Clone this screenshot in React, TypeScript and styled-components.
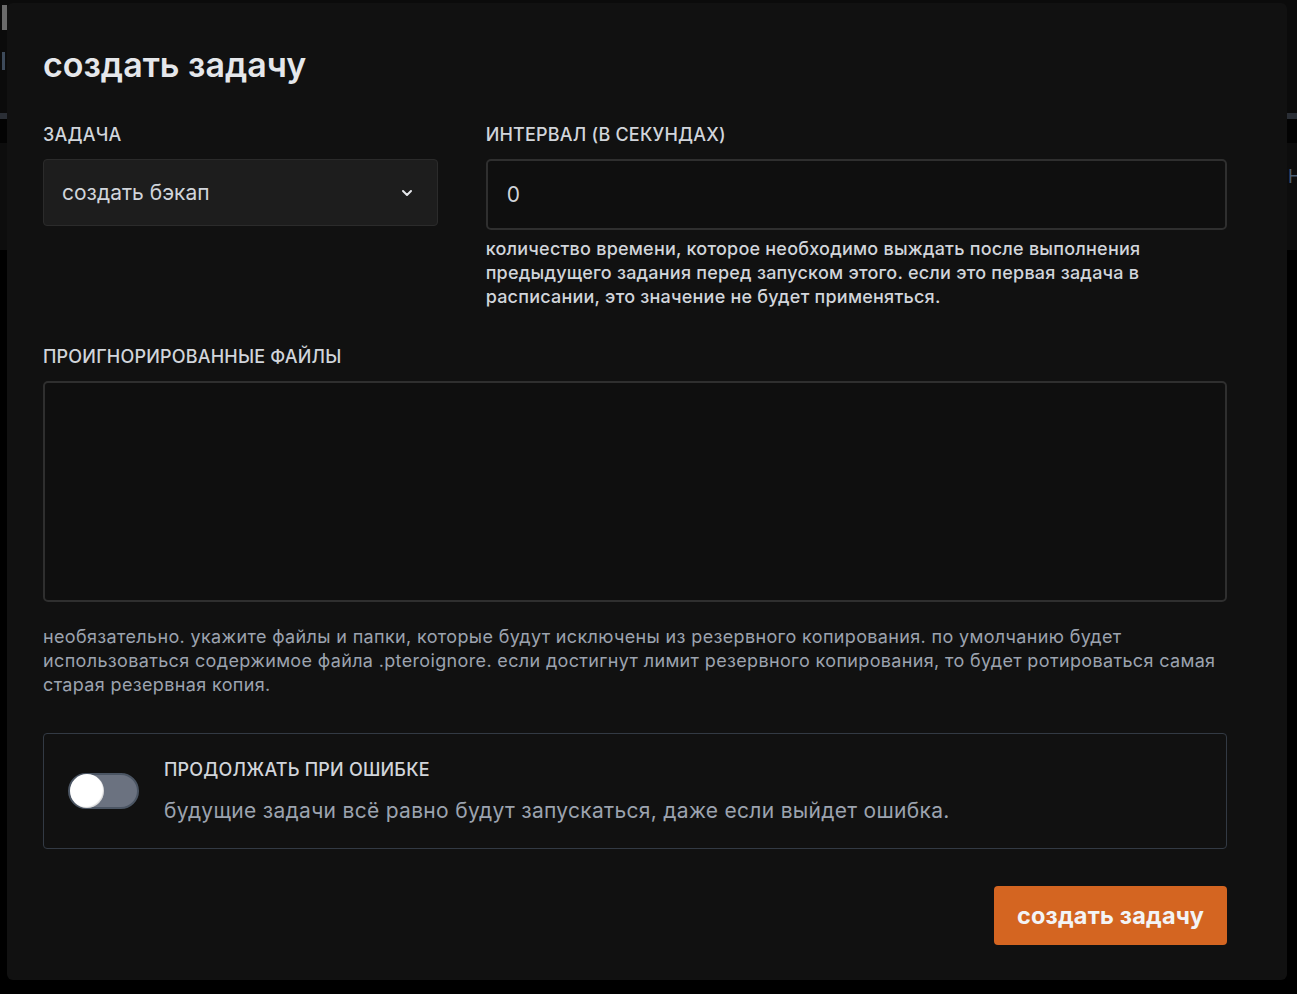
import React from "react";
import styled, { createGlobalStyle } from "styled-components";

const Global = createGlobalStyle`
  html, body { margin: 0; padding: 0; background: #000; }
  body { font-family: Inter, "Noto Sans", sans-serif; -webkit-font-smoothing: antialiased; }
  * { box-sizing: border-box; }
`;

const Page = styled.div`
  position: relative;
  width: 1297px;
  height: 994px;
  overflow: hidden;
  background: #000;
`;

const Band = styled.div<{ $h: number; $bg: string }>`
  height: ${(p) => p.$h}px;
  background: ${(p) => p.$bg};
  position: relative;
  overflow: hidden;
`;

const BgMark = styled.div<{ $left: number; $top: number; $w: number; $h: number; $c: string }>`
  position: absolute;
  top: ${(p) => p.$top}px;
  left: ${(p) => p.$left}px;
  width: ${(p) => p.$w}px;
  height: ${(p) => p.$h}px;
  background: ${(p) => p.$c};
`;

const BgText = styled.span<{ $left: number; $top: number }>`
  position: absolute;
  top: ${(p) => p.$top}px;
  left: ${(p) => p.$left}px;
  color: #4b5e73;
  font-size: 18px;
  line-height: 20px;
`;

const Modal = styled.div`
  position: absolute;
  left: 7px;
  top: 3px;
  width: 1280px;
  height: 977px;
  background: #111111;
  border-radius: 6px;
  padding: 40px 60px 0 36px;
  display: flex;
  flex-direction: column;
`;

const Title = styled.h2`
  margin: 0;
  font-size: 34px;
  font-weight: 600;
  color: #e5e7eb;
  line-height: 44px;
  letter-spacing: 0;
`;

const TopRow = styled.div`
  display: flex;
  margin-top: 36px;
`;

const LeftCol = styled.div`
  width: 33.333%;
  display: flex;
  flex-direction: column;
`;

const RightCol = styled.div`
  width: 66.667%;
  padding-left: 48px;
  display: flex;
  flex-direction: column;
`;

const Label = styled.label`
  display: block;
  font-size: 18px;
  font-weight: 500;
  text-transform: uppercase;
  color: #d1d5db;
  line-height: 24px;
  letter-spacing: 0.2px;
  margin-bottom: 12px;
`;

const Select = styled.div`
  height: 67px;
  background: #1d1d1d;
  border: 1px solid #2b2b2b;
  border-radius: 4px;
  display: flex;
  align-items: center;
  justify-content: space-between;
  padding: 0 22px 0 18px;
  color: #d1d5db;
  font-size: 21px;
`;

const Input = styled.div<{ $h: number }>`
  height: ${(p) => p.$h}px;
  background: #0f0f0f;
  border: 2px solid #2f2f2f;
  border-radius: 5px;
  padding: 0 19px;
  display: flex;
  align-items: center;
  color: #d1d5db;
  font-size: 21px;
`;

const Help = styled.p<{ $muted?: boolean }>`
  margin: ${(p) => (p.$muted ? "23px" : "7px")} 0 0;
  font-size: 18px;
  line-height: 24px;
  font-weight: ${(p) => (p.$muted ? 400 : 500)};
  color: ${(p) => (p.$muted ? "#9ca3af" : "#d1d5db")};
  letter-spacing: ${(p) => (p.$muted ? "0.35px" : "0.22px")};
`;

const Section = styled.div`
  margin-top: 36px;
  display: flex;
  flex-direction: column;
`;

const ToggleBox = styled.div`
  margin-top: 36px;
  height: 116px;
  border: 1px solid #333a44;
  border-radius: 4px;
  display: flex;
  align-items: center;
  padding: 0 24px;
  gap: 25px;
`;

const Switch = styled.div`
  width: 71px;
  height: 36px;
  border-radius: 18px;
  background: #6b7280;
  border: 2px solid #4b5563;
  position: relative;
  flex-shrink: 0;
`;

const Knob = styled.span`
  position: absolute;
  left: 0px;
  top: -1px;
  width: 34px;
  height: 34px;
  border-radius: 50%;
  background: #fff;
  box-shadow: inset -1px -1px 1px rgba(0, 0, 0, 0.15);
`;

const ToggleText = styled.div`
  display: flex;
  flex-direction: column;
  gap: 17px;
`;

const ToggleLabel = styled.div`
  font-size: 18px;
  font-weight: 500;
  color: #d1d5db;
  letter-spacing: 0.2px;
  line-height: 22px;
`;

const ToggleDesc = styled.div`
  font-size: 21px;
  color: #9ca3af;
  line-height: 26px;
  letter-spacing: 0.3px;
`;

const Footer = styled.div`
  margin-top: 37px;
  display: flex;
  justify-content: flex-end;
`;

const Button = styled.button`
  height: 59px;
  width: 233px;
  border: none;
  border-radius: 4px;
  background: #d46521;
  color: #f3f4f6;
  font-family: Inter, "Noto Sans", sans-serif;
  font-size: 23.5px;
  font-weight: 700;
  letter-spacing: 0.2px;
  cursor: pointer;
`;

const Chevron = () => (
  <svg width="16" height="16" viewBox="0 0 24 24" fill="none" stroke="#e5e7eb" strokeWidth="3" strokeLinecap="round" strokeLinejoin="round">
    <path d="M6 9l6 6 6-6" />
  </svg>
);

export default function App() {
  return (
    <>
      <Global />
      <Page>
        <Band $h={113} $bg="#0b0b0b">
          <BgMark $left={2} $top={5} $w={5} $h={25} $c="#6b6b6b" />
          <BgMark $left={2} $top={52} $w={3} $h={18} $c="#3d4a5a" />
        </Band>
        <Band $h={6} $bg="#2a2e35" />
        <Band $h={24} $bg="#030303" />
        <Band $h={107} $bg="#0d0d0d">
          <BgText $left={1288} $top={24}>Н</BgText>
        </Band>
        <Band $h={744} $bg="#000" />
        <Modal>
          <Title>создать задачу</Title>
          <TopRow>
            <LeftCol>
              <Label>задача</Label>
              <Select>
                <span>создать бэкап</span>
                <Chevron />
              </Select>
            </LeftCol>
            <RightCol>
              <Label>интервал (в секундах)</Label>
              <Input $h={71}>0</Input>
              <Help>
                количество времени, которое необходимо выждать после выполнения предыдущего задания перед запуском этого. если это первая задача в расписании, это значение не будет применяться.
              </Help>
            </RightCol>
          </TopRow>
          <Section>
            <Label>проигнорированные файлы</Label>
            <Input $h={221} />
            <Help $muted>
              необязательно. укажите файлы и папки, которые будут исключены из резервного копирования. по умолчанию будет использоваться содержимое файла .pteroignore. если достигнут лимит резервного копирования, то будет ротироваться самая старая резервная копия.
            </Help>
          </Section>
          <ToggleBox>
            <Switch>
              <Knob />
            </Switch>
            <ToggleText>
              <ToggleLabel>ПРОДОЛЖАТЬ ПРИ ОШИБКЕ</ToggleLabel>
              <ToggleDesc>будущие задачи всё равно будут запускаться, даже если выйдет ошибка.</ToggleDesc>
            </ToggleText>
          </ToggleBox>
          <Footer>
            <Button>создать задачу</Button>
          </Footer>
        </Modal>
      </Page>
    </>
  );
}
